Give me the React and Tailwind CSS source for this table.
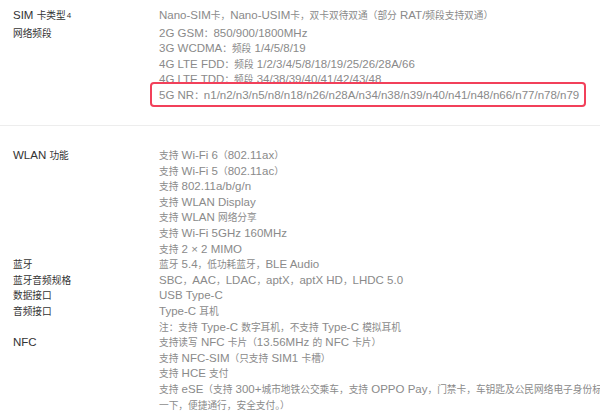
import React from 'react';

const top = [
  {
    label: 'SIM 卡类型',
    sup: '4',
    values: ['Nano-SIM卡，Nano-USIM卡，双卡双待双通（部分 RAT/频段支持双通）'],
  },
  {
    label: '网络频段',
    values: [
      '2G GSM：850/900/1800MHz',
      '3G WCDMA：频段 1/4/5/8/19',
      '4G LTE FDD：频段 1/2/3/4/5/8/18/19/25/26/28A/66',
      '4G LTE TDD：频段 34/38/39/40/41/42/43/48',
      '5G NR：n1/n2/n3/n5/n8/n18/n26/n28A/n34/n38/n39/n40/n41/n48/n66/n77/n78/n79',
    ],
  },
];

const bottom = [
  {
    label: 'WLAN 功能',
    values: [
      '支持 Wi-Fi 6（802.11ax）',
      '支持 Wi-Fi 5（802.11ac）',
      '支持 802.11a/b/g/n',
      '支持 WLAN Display',
      '支持 WLAN 网络分享',
      '支持 Wi-Fi 5GHz 160MHz',
      '支持 2 × 2 MIMO',
    ],
  },
  { label: '蓝牙', values: ['蓝牙 5.4，低功耗蓝牙，BLE Audio'] },
  { label: '蓝牙音频规格', values: ['SBC，AAC，LDAC，aptX，aptX HD，LHDC 5.0'] },
  { label: '数据接口', values: ['USB Type-C'] },
  {
    label: '音频接口',
    values: ['Type-C 耳机', '注：支持 Type-C 数字耳机，不支持 Type-C 模拟耳机'],
  },
  {
    label: 'NFC',
    values: [
      '支持读写 NFC 卡片（13.56MHz 的 NFC 卡片）',
      '支持 NFC-SIM（只支持 SIM1 卡槽）',
      '支持 HCE 支付',
      '支持 eSE（支持 300+城市地铁公交乘车，支持 OPPO Pay，门禁卡，车钥匙及公民网络电子身份标识 eID，碰',
      '一下，便捷通行，安全支付。）',
    ],
  },
];

// the Chinese glyphs sit a bit smaller than the latin ones in the source page
const CJK = /([\u3000-\u303f\u3400-\u9fff\uff00-\uffef]+)/;

function Mixed({ text }) {
  return text.split(CJK).map((part, i) =>
    CJK.test(part) ? (
      <span key={i} className="text-[9.7px]">{part}</span>
    ) : (
      <React.Fragment key={i}>{part}</React.Fragment>
    )
  );
}

function SpecRow({ row, className = '' }) {
  return (
    <div className={`grid grid-cols-[146px_1fr] ${className}`}>
      <div className="text-[#333333]">
        <Mixed text={row.label} />
        {row.sup && <sup className="text-[8px] ml-[1px] relative top-[-1px]">{row.sup}</sup>}
      </div>
      <div className="text-[#8a8a8a]">
        {row.values.map((v, i) => (
          <div key={i} className="whitespace-nowrap">
            <Mixed text={v} />
          </div>
        ))}
      </div>
    </div>
  );
}

export default function App() {
  return (
    <div
      className="relative w-[600px] h-[420px] overflow-hidden bg-white text-[11.5px] leading-[15.6px]"
      style={{ fontFamily: '"Liberation Sans", "Noto Sans CJK SC", sans-serif' }}
    >
      {/* Network */}
      <div className="px-[13px] pt-[8px] h-[125px]">
        <SpecRow row={top[0]} className="mb-[2px]" />
        <SpecRow row={top[1]} />
      </div>

      <div className="h-px bg-[#ededed]" />

      {/* Connectivity */}
      <div className="px-[13px] pt-[22px]">
        {bottom.map((row, i) => (
          <SpecRow key={i} row={row} />
        ))}
      </div>

      {/* highlight box */}
      <div className="absolute left-[150px] top-[82px] w-[436px] h-[25px] border-2 border-[#f2405a] rounded-[4px]" />
    </div>
  );
}
